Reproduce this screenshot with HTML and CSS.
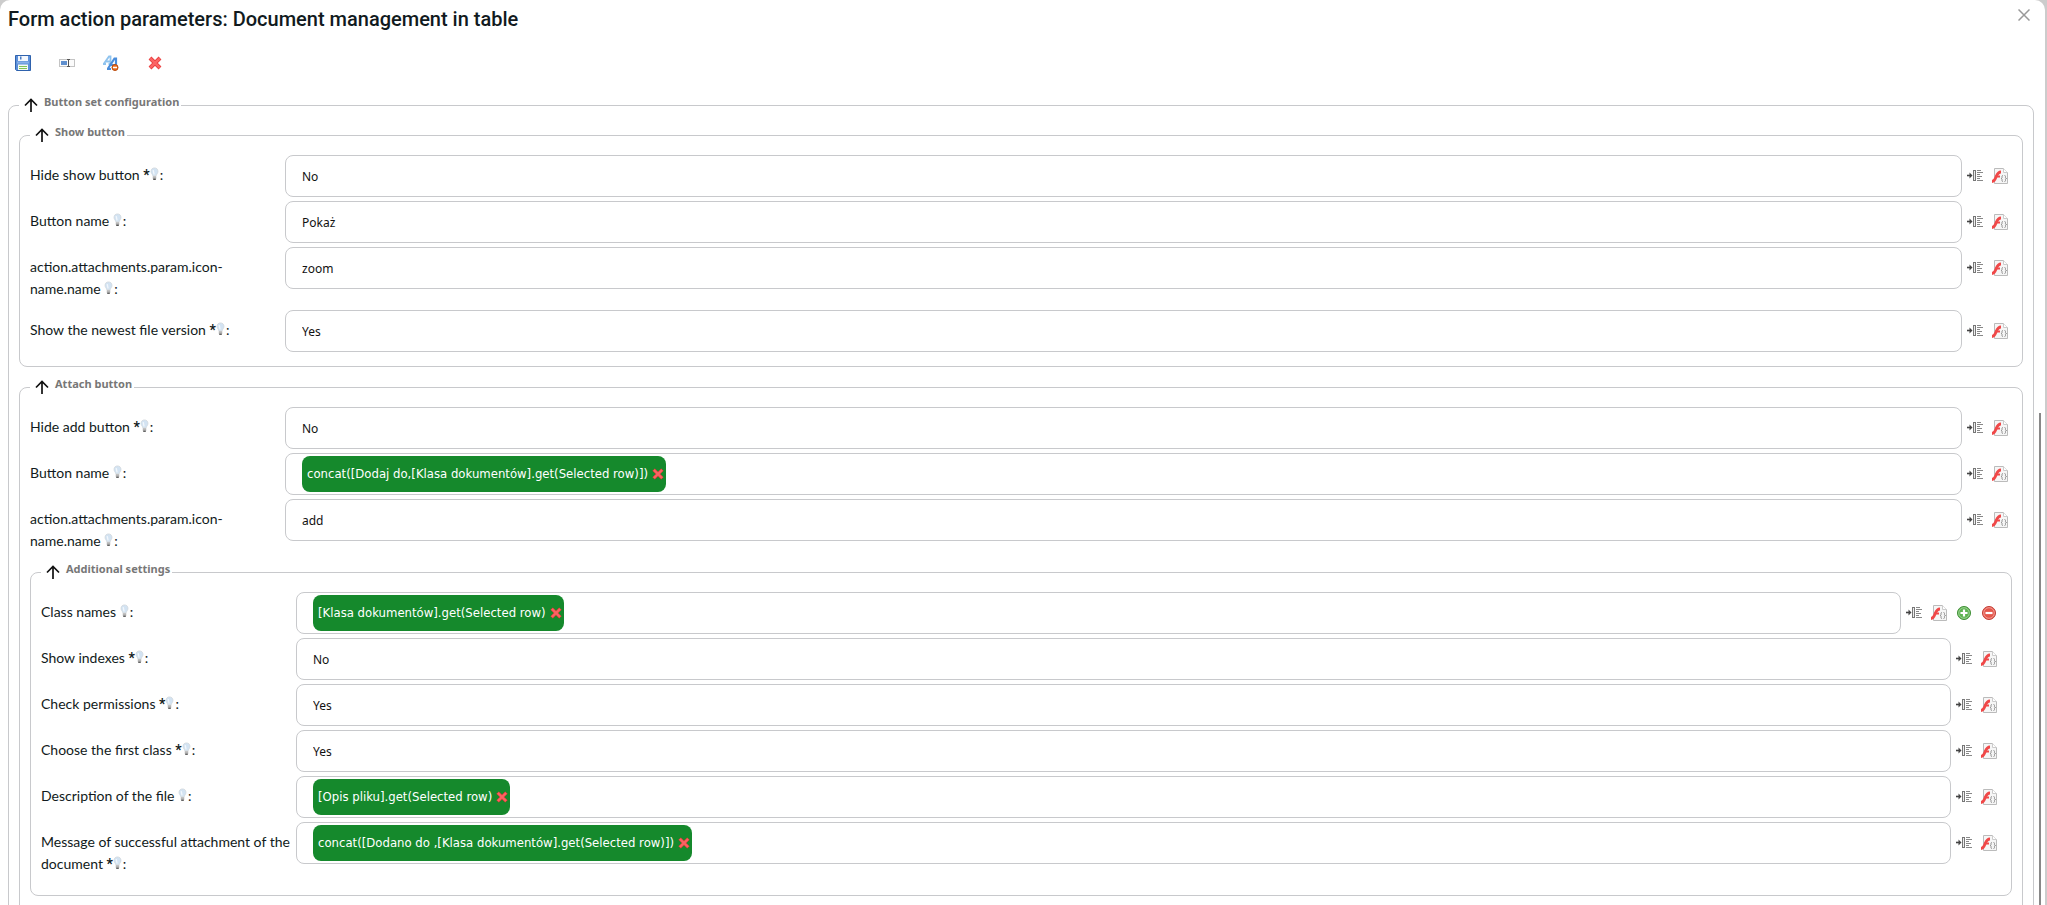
FILE: index.html
```
<!DOCTYPE html>
<html lang="en">
<head>
  <meta charset="UTF-8">
  <meta name="viewport" content="width=device-width, initial-scale=1.0">
  <title>Form action parameters</title>
  <link rel="stylesheet" href="styles.css">
</head>
<body>

  <!-- Shared icons -->
  <svg class="sprite" aria-hidden="true">
    <symbol id="arrow" viewBox="0 0 14 14">
      <path d="M7 14V1.500M1 7.500l6-6 6 6" fill="none" stroke="#111" stroke-width="1.700"/>
    </symbol>
    <symbol id="bulb" viewBox="0 0 10 16">
      <path d="M5 1C2.600 1 1 2.700 1 5c0 2 1.600 3 2 5h4c.4-2 2-3 2-5 0-2.300-1.600-4-4-4z" fill="#d3e3f2" stroke="#d0d5da" stroke-width=".8"/>
      <path d="M3.500 3.500l1 5" stroke="#f2f7fc" stroke-width="1.500"/>
      <path d="M3 10.500h4v3H3z" fill="#b5b5b5"/>
      <path d="M3.500 14h3" stroke="#555" stroke-width="1.500"/>
    </symbol>
    <symbol id="insert" viewBox="0 0 16 16">
      <path d="M0 7.500h3" stroke="#444" stroke-width="1.600"/>
      <path d="M2.500 4.500L5.500 7.500l-3 3z" fill="#444"/>
      <rect x="6.500" y="2.500" width="2" height="10" fill="#eee" stroke="#777"/>
      <path d="M10 2.500h4M10 4.500h6M10 6.500h3M10 8.500h5M10 10.500h3M10 12.500h6" stroke="#888"/>
    </symbol>
    <symbol id="script" viewBox="0 0 16 16">
      <path d="M2.500.5h9l4 4v11h-13z" fill="#f6f6f6" stroke="#bbb"/>
      <path d="M11.500.5v4h4" fill="#fff" stroke="#ccc"/>
      <path d="M0 13.500c2.500 0 3-2 4-4.500s2.500-5 5-5" fill="none" stroke="#f04848" stroke-width="2.800"/>
      <path d="M3 8.500h5" stroke="#f04848" stroke-width="2"/>
      <path d="M11 7.500c-1.500 0-.8 1.500-1 2.300-.1.500-.6.700-1 .7.400 0 .9.200 1 .7.200.8-.5 2.300 1 2.300M12.500 7.500c1.500 0 .8 1.500 1 2.300.1.500.6.700 1 .7-.4 0-.9.200-1 .7-.2.800.5 2.300-1 2.300" fill="none" stroke="#888" stroke-width=".9"/>
    </symbol>
    <symbol id="plus" viewBox="0 0 16 16">
      <circle cx="8" cy="8" r="6.500" fill="#5fb353" stroke="#3f8f35"/>
      <circle cx="8" cy="8" r="5.300" fill="none" stroke="#a9dba0" stroke-width=".8"/>
      <path d="M8 4.500v7M4.500 8h7" stroke="#fff" stroke-width="2.200"/>
    </symbol>
    <symbol id="minus" viewBox="0 0 16 16">
      <circle cx="8" cy="8" r="6.500" fill="#e5574c" stroke="#c23c33"/>
      <circle cx="8" cy="8" r="5.300" fill="none" stroke="#f5aba4" stroke-width=".8"/>
      <path d="M4.500 8h7" stroke="#fff" stroke-width="2.200"/>
    </symbol>
    <symbol id="cross" viewBox="0 0 16 16">
      <path d="M3 3l10 10M13 3L3 13" stroke="#e83a3a" stroke-width="4"/>
      <path d="M3.300 3.300l9.400 9.400M12.700 3.300l-9.400 9.400" stroke="#fb6464" stroke-width="2.400"/>
    </symbol>
  </svg>

  <div class="dialog">
    <header class="dialog-header">
      <h1>Form action parameters: Document management in table</h1>
      <button class="close" aria-label="Close">
        <svg viewBox="0 0 12 12"><path d="M.5.5l11 11M11.500.5l-11 11" stroke="#999" stroke-width="1.500"/></svg>
      </button>
    </header>

    <div class="toolbar">
      <button class="icon-btn" title="Save">
        <svg viewBox="0 0 16 16">
          <path d="M.5.5h15v15h-14l-1-1z" fill="#5b8fd9" stroke="#2f62ad"/>
          <path d="M3 1h10v5H3z" fill="#f3f7fd"/>
          <path d="M5 1.500h1.500v3H5z" fill="#4a7cc4"/>
          <path d="M2 6.500h12v2H2z" fill="#86afe6"/>
          <path d="M3 9.500h10V15H3z" fill="#f6faf2"/>
          <path d="M4 11.500h8M4 13.500h8" stroke="#7fc356"/>
        </svg>
      </button>
      <button class="icon-btn" title="Rename">
        <svg viewBox="0 0 16 16">
          <rect x=".5" y="4.500" width="15" height="7" fill="#fbfbfb" stroke="#c4c4c4"/>
          <path d="M2 6h6v4H2z" fill="#5f8fce"/>
          <path d="M8 4.500h3M9.500 4.500v7M8 11.500h3" stroke="#555" fill="none"/>
        </svg>
      </button>
      <button class="icon-btn" title="Clear formatting">
        <svg viewBox="0 0 16 16">
          <path d="M1 8.500L6 1.500h1.500v7M3 6.500h4.500M0 9h3M5.500 9H9" fill="none" stroke="#8fc3ee" stroke-width="1.800"/>
          <path d="M5 13.500L11.500 3.500H13v9M7.500 10H13M4 14h4" fill="none" stroke="#4a8ddb" stroke-width="2.200"/>
          <circle cx="12" cy="12.500" r="3" fill="#ee6c1b" stroke="#b84a0c"/>
          <path d="M10 12.500h4" stroke="#fff" stroke-width="1.400"/>
        </svg>
      </button>
      <button class="icon-btn" title="Delete"><svg><use href="#cross"/></svg></button>
    </div>

    <fieldset class="group">
      <legend><svg><use href="#arrow"/></svg><span>Button set configuration</span></legend>

      <fieldset class="group">
        <legend><svg><use href="#arrow"/></svg><span>Show button</span></legend>
        <div class="row">
          <label for="hideShow">Hide show button <b>*</b><svg><use href="#bulb"/></svg>:</label>
          <div class="field"><input type="text" id="hideShow" value="No"></div>
          <div class="actions">
            <button class="icon-btn" title="Insert variable"><svg><use href="#insert"/></svg></button>
            <button class="icon-btn" title="Insert function"><svg><use href="#script"/></svg></button>
          </div>
        </div>
        <div class="row">
          <label for="showName">Button name <svg><use href="#bulb"/></svg>:</label>
          <div class="field"><input type="text" id="showName" value="Pokaż"></div>
          <div class="actions">
            <button class="icon-btn" title="Insert variable"><svg><use href="#insert"/></svg></button>
            <button class="icon-btn" title="Insert function"><svg><use href="#script"/></svg></button>
          </div>
        </div>
        <div class="row">
          <label for="showIcon">action.attachments.param.icon-<wbr>name.name <svg><use href="#bulb"/></svg>:</label>
          <div class="field"><input type="text" id="showIcon" value="zoom"></div>
          <div class="actions">
            <button class="icon-btn" title="Insert variable"><svg><use href="#insert"/></svg></button>
            <button class="icon-btn" title="Insert function"><svg><use href="#script"/></svg></button>
          </div>
        </div>
        <div class="row">
          <label for="newest">Show the newest file version <b>*</b><svg><use href="#bulb"/></svg>:</label>
          <div class="field"><input type="text" id="newest" value="Yes"></div>
          <div class="actions">
            <button class="icon-btn" title="Insert variable"><svg><use href="#insert"/></svg></button>
            <button class="icon-btn" title="Insert function"><svg><use href="#script"/></svg></button>
          </div>
        </div>
      </fieldset>

      <fieldset class="group">
        <legend><svg><use href="#arrow"/></svg><span>Attach button</span></legend>
        <div class="row">
          <label for="hideAdd">Hide add button <b>*</b><svg><use href="#bulb"/></svg>:</label>
          <div class="field"><input type="text" id="hideAdd" value="No"></div>
          <div class="actions">
            <button class="icon-btn" title="Insert variable"><svg><use href="#insert"/></svg></button>
            <button class="icon-btn" title="Insert function"><svg><use href="#script"/></svg></button>
          </div>
        </div>
        <div class="row">
          <label for="addName">Button name <svg><use href="#bulb"/></svg>:</label>
          <div class="field">
            <span class="chip">concat([Dodaj do,[Klasa dokumentów].get(Selected row)])<button class="remove" aria-label="Remove"><svg><use href="#cross"/></svg></button></span>
            <input type="text" id="addName">
          </div>
          <div class="actions">
            <button class="icon-btn" title="Insert variable"><svg><use href="#insert"/></svg></button>
            <button class="icon-btn" title="Insert function"><svg><use href="#script"/></svg></button>
          </div>
        </div>
        <div class="row">
          <label for="addIcon">action.attachments.param.icon-<wbr>name.name <svg><use href="#bulb"/></svg>:</label>
          <div class="field"><input type="text" id="addIcon" value="add"></div>
          <div class="actions">
            <button class="icon-btn" title="Insert variable"><svg><use href="#insert"/></svg></button>
            <button class="icon-btn" title="Insert function"><svg><use href="#script"/></svg></button>
          </div>
        </div>

        <fieldset class="group">
          <legend><svg><use href="#arrow"/></svg><span>Additional settings</span></legend>
          <div class="row">
            <label for="classNames">Class names <svg><use href="#bulb"/></svg>:</label>
            <div class="field">
              <span class="chip">[Klasa dokumentów].get(Selected row)<button class="remove" aria-label="Remove"><svg><use href="#cross"/></svg></button></span>
              <input type="text" id="classNames">
            </div>
            <div class="actions">
              <button class="icon-btn" title="Insert variable"><svg><use href="#insert"/></svg></button>
              <button class="icon-btn" title="Insert function"><svg><use href="#script"/></svg></button>
              <button class="icon-btn" title="Add"><svg><use href="#plus"/></svg></button>
              <button class="icon-btn" title="Remove"><svg><use href="#minus"/></svg></button>
            </div>
          </div>
          <div class="row">
            <label for="showIndexes">Show indexes <b>*</b><svg><use href="#bulb"/></svg>:</label>
            <div class="field"><input type="text" id="showIndexes" value="No"></div>
            <div class="actions">
              <button class="icon-btn" title="Insert variable"><svg><use href="#insert"/></svg></button>
              <button class="icon-btn" title="Insert function"><svg><use href="#script"/></svg></button>
            </div>
          </div>
          <div class="row">
            <label for="permissions">Check permissions <b>*</b><svg><use href="#bulb"/></svg>:</label>
            <div class="field"><input type="text" id="permissions" value="Yes"></div>
            <div class="actions">
              <button class="icon-btn" title="Insert variable"><svg><use href="#insert"/></svg></button>
              <button class="icon-btn" title="Insert function"><svg><use href="#script"/></svg></button>
            </div>
          </div>
          <div class="row">
            <label for="firstClass">Choose the first class <b>*</b><svg><use href="#bulb"/></svg>:</label>
            <div class="field"><input type="text" id="firstClass" value="Yes"></div>
            <div class="actions">
              <button class="icon-btn" title="Insert variable"><svg><use href="#insert"/></svg></button>
              <button class="icon-btn" title="Insert function"><svg><use href="#script"/></svg></button>
            </div>
          </div>
          <div class="row">
            <label for="description">Description of the file <svg><use href="#bulb"/></svg>:</label>
            <div class="field">
              <span class="chip">[Opis pliku].get(Selected row)<button class="remove" aria-label="Remove"><svg><use href="#cross"/></svg></button></span>
              <input type="text" id="description">
            </div>
            <div class="actions">
              <button class="icon-btn" title="Insert variable"><svg><use href="#insert"/></svg></button>
              <button class="icon-btn" title="Insert function"><svg><use href="#script"/></svg></button>
            </div>
          </div>
          <div class="row">
            <label for="message">Message of successful attachment of the document <b>*</b><svg><use href="#bulb"/></svg>:</label>
            <div class="field">
              <span class="chip">concat([Dodano do ,[Klasa dokumentów].get(Selected row)])<button class="remove" aria-label="Remove"><svg><use href="#cross"/></svg></button></span>
              <input type="text" id="message">
            </div>
            <div class="actions">
              <button class="icon-btn" title="Insert variable"><svg><use href="#insert"/></svg></button>
              <button class="icon-btn" title="Insert function"><svg><use href="#script"/></svg></button>
            </div>
          </div>
        </fieldset>
      </fieldset>
    </fieldset>

    <div class="scroll-thumb"></div>
  </div>

</body>
</html>
```

FILE: styles.css
```
* {
  box-sizing: border-box;
}

body {
  margin: 0;
  height: 100vh;
  overflow: hidden;
  padding-right: 2px;
  background-color: #ccc;
  font-family: Lato, sans-serif;
  font-size: 14px;
  color: #111a20;
}

button {
  padding: 0;
  border: none;
  background: none;
  cursor: pointer;
}

svg {
  display: block;
}

.sprite {
  position: absolute;
  width: 0;
  height: 0;
}

.dialog {
  position: relative;
  height: 100vh;
  overflow: hidden;
  padding: 0 11px 0 8px;
  background-color: #fff;
  border-radius: 10px 10px 0 0;
}

.dialog-header {
  display: flex;
  justify-content: space-between;
  align-items: flex-start;
  height: 48px;
}

h1 {
  margin: 4px 0 0;
  font-family: Roboto, sans-serif;
  font-size: 20px;
  line-height: 30px;
  font-weight: 500;
}

.close {
  margin: 9px 4px 0 0;
}

.close svg {
  width: 12px;
  height: 12px;
}

.toolbar {
  display: flex;
  gap: 28px;
  height: 47px;
  padding: 7px;
}

.icon-btn,
.icon-btn svg {
  width: 16px;
  height: 16px;
}

/* Collapsible sections */
.group {
  min-width: 0;
  margin: 2px 0 10px;
  padding: 8px 10px 12px;
  border: 1px solid #c8c9cc;
  border-radius: 8px;
}

.dialog > .group {
  margin-top: 0;
}

legend {
  display: flex;
  gap: 6px;
  height: 20px;
  padding: 0 2px 0 5px;
  font-family: "Noto Sans", sans-serif;
  font-size: 11px;
  line-height: 14px;
  font-weight: bold;
  color: #777;
}

legend svg {
  width: 14px;
  height: 14px;
  margin-top: 3px;
}

/* Parameter rows */
.row {
  display: grid;
  grid-template-columns: 255px 1fr auto;
  padding: 2px 0;
}

label {
  padding: 9px 0 6px;
  line-height: 22px;
}

label b {
  font-family: Roboto, sans-serif;
}

label svg {
  display: inline-block;
  width: 9px;
  height: 14px;
  margin: 0 1px 0 0;
  vertical-align: -1px;
}

.field {
  display: flex;
  height: 42px;
  padding: 2px 16px;
  border: 1px solid #c8c9cc;
  border-radius: 8px;
}

.field input {
  flex: 1;
  min-width: 0;
  padding: 0;
  border: none;
  outline: none;
  background: none;
  color: #111;
  font-family: "Noto Sans", sans-serif;
  font-size: 12px;
}

.chip {
  display: flex;
  align-items: center;
  gap: 3px;
  height: 36px;
  padding: 0 1px 2px 5px;
  border-radius: 8px;
  background-color: #15892c;
  color: #fff;
  font-family: "DejaVu Sans Condensed", "Noto Sans", sans-serif;
  font-size: 13px;
  white-space: nowrap;
}

.remove svg {
  width: 14px;
  height: 14px;
  margin-top: 2px;
}

.actions {
  display: flex;
  gap: 9px;
  padding: 13px 4px 0 5px;
}

/* Sits over the right edge of the dialog */
.scroll-thumb {
  position: absolute;
  top: 413px;
  right: 4px;
  bottom: 0;
  width: 2px;
  background-color: #888;
}
```
